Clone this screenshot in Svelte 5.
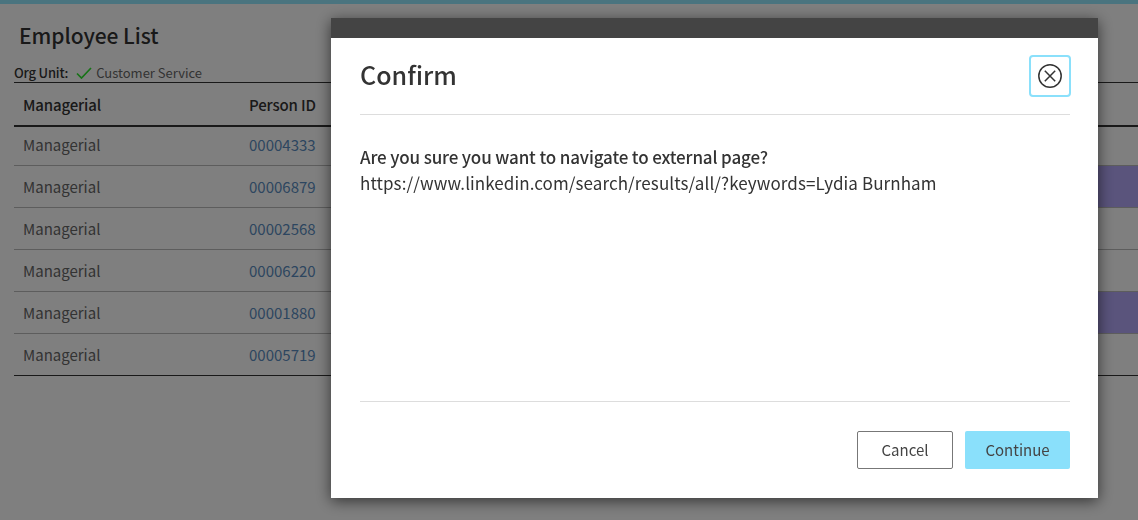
<script>
  const rows = [
    { id: '00004333', hi: false },
    { id: '00006879', hi: true },
    { id: '00002568', hi: false },
    { id: '00006220', hi: false },
    { id: '00001880', hi: true },
    { id: '00005719', hi: false }
  ];
</script>

<div class="page">
  <div class="topbar"></div>
  <div class="content">
    <h1>Employee List</h1>
    <div class="org">
      <b>Org Unit:</b>
      <svg class="check" width="16" height="12" viewBox="0 0 16 12"><path d="M1 6.5 L5.5 11 L15 1" fill="none" stroke="#2ee62e" stroke-width="1.7"/></svg>
      <span>Customer Service</span>
    </div>
    <div class="row head">
      <div class="c1">Managerial</div>
      <div class="c2">Person ID</div>
      <div class="c3"></div>
    </div>
    {#each rows as r}
      <div class="row">
        <div class="c1">Managerial</div>
        <div class="c2 link">{r.id}</div>
        <div class="c3" class:hi={r.hi}></div>
      </div>
    {/each}
  </div>
</div>

<div class="overlay">
  <div class="modal">
    <div class="bar"></div>
    <div class="body">
      <div class="mhead">
        <h2>Confirm</h2>
        <button class="close" aria-label="Close">
          <svg width="26" height="26" viewBox="0 0 26 26"><circle cx="13" cy="13" r="11.2" fill="none" stroke="#333" stroke-width="1.5"/><path d="M7.8 7.8 L18.2 18.2 M18.2 7.8 L7.8 18.2" stroke="#333" stroke-width="1.5" fill="none"/></svg>
        </button>
      </div>
      <div class="msg">
        <div class="q">Are you sure you want to navigate to external page?</div>
        <div class="url">https://www.linkedin.com/search/results/all/?keywords=Lydia Burnham</div>
      </div>
      <div class="foot">
        <button class="btn cancel">Cancel</button>
        <button class="btn cont">Continue</button>
      </div>
    </div>
  </div>
</div>

<style>
  :global(body) {
    margin: 0;
    background: #fff;
    font-family: "Noto Sans CJK SC", "Noto Sans", sans-serif;
    overflow: hidden;
  }
  .page { height: 520px; color: #333; }
  .topbar { height: 4px; background: #94e9ff; }
  .content { padding: 0 0 0 14px; }
  h1 {
    margin: 0;
    padding: 14px 0 0 5px;
    font-size: 21px;
    letter-spacing: -0.05px;
    line-height: 34px;
    font-weight: 500;
    color: #333;
  }
  .org {
    display: flex;
    align-items: center;
    height: 31px;
    padding-top: 12px;
    box-sizing: border-box;
    font-size: 13px;
    line-height: 18px;
    border-bottom: 1px solid #333;
    color: #666;
  }
  .org b { font-weight: 500; color: #333; letter-spacing: -0.2px; }
  .check { margin: 0 4px 0 8px; }
  .row {
    display: flex;
    height: 42px;
    box-sizing: border-box;
    border-bottom: 1px solid #bbb;
    font-size: 15px;
    align-items: center;
    color: #666;
    padding-bottom: 1px;
  }
  .row:last-child { border-bottom-color: #333; }
  .head {
    height: 44px;
    padding-bottom: 0;
    border-bottom: 2px solid #333;
    font-weight: 500;
    letter-spacing: -0.15px;
    color: #333;
  }
  .head + .row { height: 39px; padding-bottom: 4px; }
  .c1 { width: 235px; padding-left: 9px; box-sizing: border-box; }
  .c2 { width: 200px; }
  .c3 { flex: 1; align-self: stretch; margin-bottom: -1px; }
  .hi { background: #b4a8f8; }
  .link { color: #5a8cc0; }

  .overlay {
    position: fixed;
    inset: 0;
    background: rgba(0, 0, 0, 0.5);
  }
  .modal {
    width: 767px;
    height: 480px;
    margin: 18px 0 0 331px;
    background: #fff;
    display: flex;
    flex-direction: column;
    box-shadow: 0 3px 14px rgba(0, 0, 0, 0.6);
  }
  .bar { height: 20px; background: #444; flex: none; }
  .body {
    flex: 1;
    padding: 0 28px 0 29px;
    display: flex;
    flex-direction: column;
  }
  .mhead {
    height: 76px;
    display: flex;
    align-items: center;
    justify-content: space-between;
    border-bottom: 1px solid #ddd;
    flex: none;
  }
  h2 {
    margin: 0 0 5px;
    font-size: 25px;
    line-height: 36px;
    font-weight: 500;
    color: #333;
  }
  .close {
    width: 42px;
    height: 42px;
    margin-right: -1px;
    margin-bottom: 1px;
    padding: 0;
    background: #fff;
    border: 2px solid #8ae0fb;
    border-radius: 4px;
    display: flex;
    align-items: center;
    justify-content: center;
  }
  .msg {
    flex: 1;
    padding-top: 29px;
    font-size: 17px;
    line-height: 26px;
    color: #333;
    border-bottom: 1px solid #ddd;
  }
  .q { font-weight: 500; letter-spacing: -0.14px; }
  .url { letter-spacing: 0.08px; }
  .foot {
    height: 96px;
    flex: none;
    display: flex;
    justify-content: flex-end;
    align-items: flex-start;
    gap: 12px;
    padding-top: 29px;
    box-sizing: border-box;
  }
  .btn {
    height: 38px;
    font-family: inherit;
    font-size: 15px;
    border-radius: 2px;
    color: #444;
    padding: 0 0 2px;
  }
  .cancel { width: 96px; background: #fff; border: 1px solid #777; }
  .cont { width: 105px; background: #8ae0fb; border: none; }
</style>
